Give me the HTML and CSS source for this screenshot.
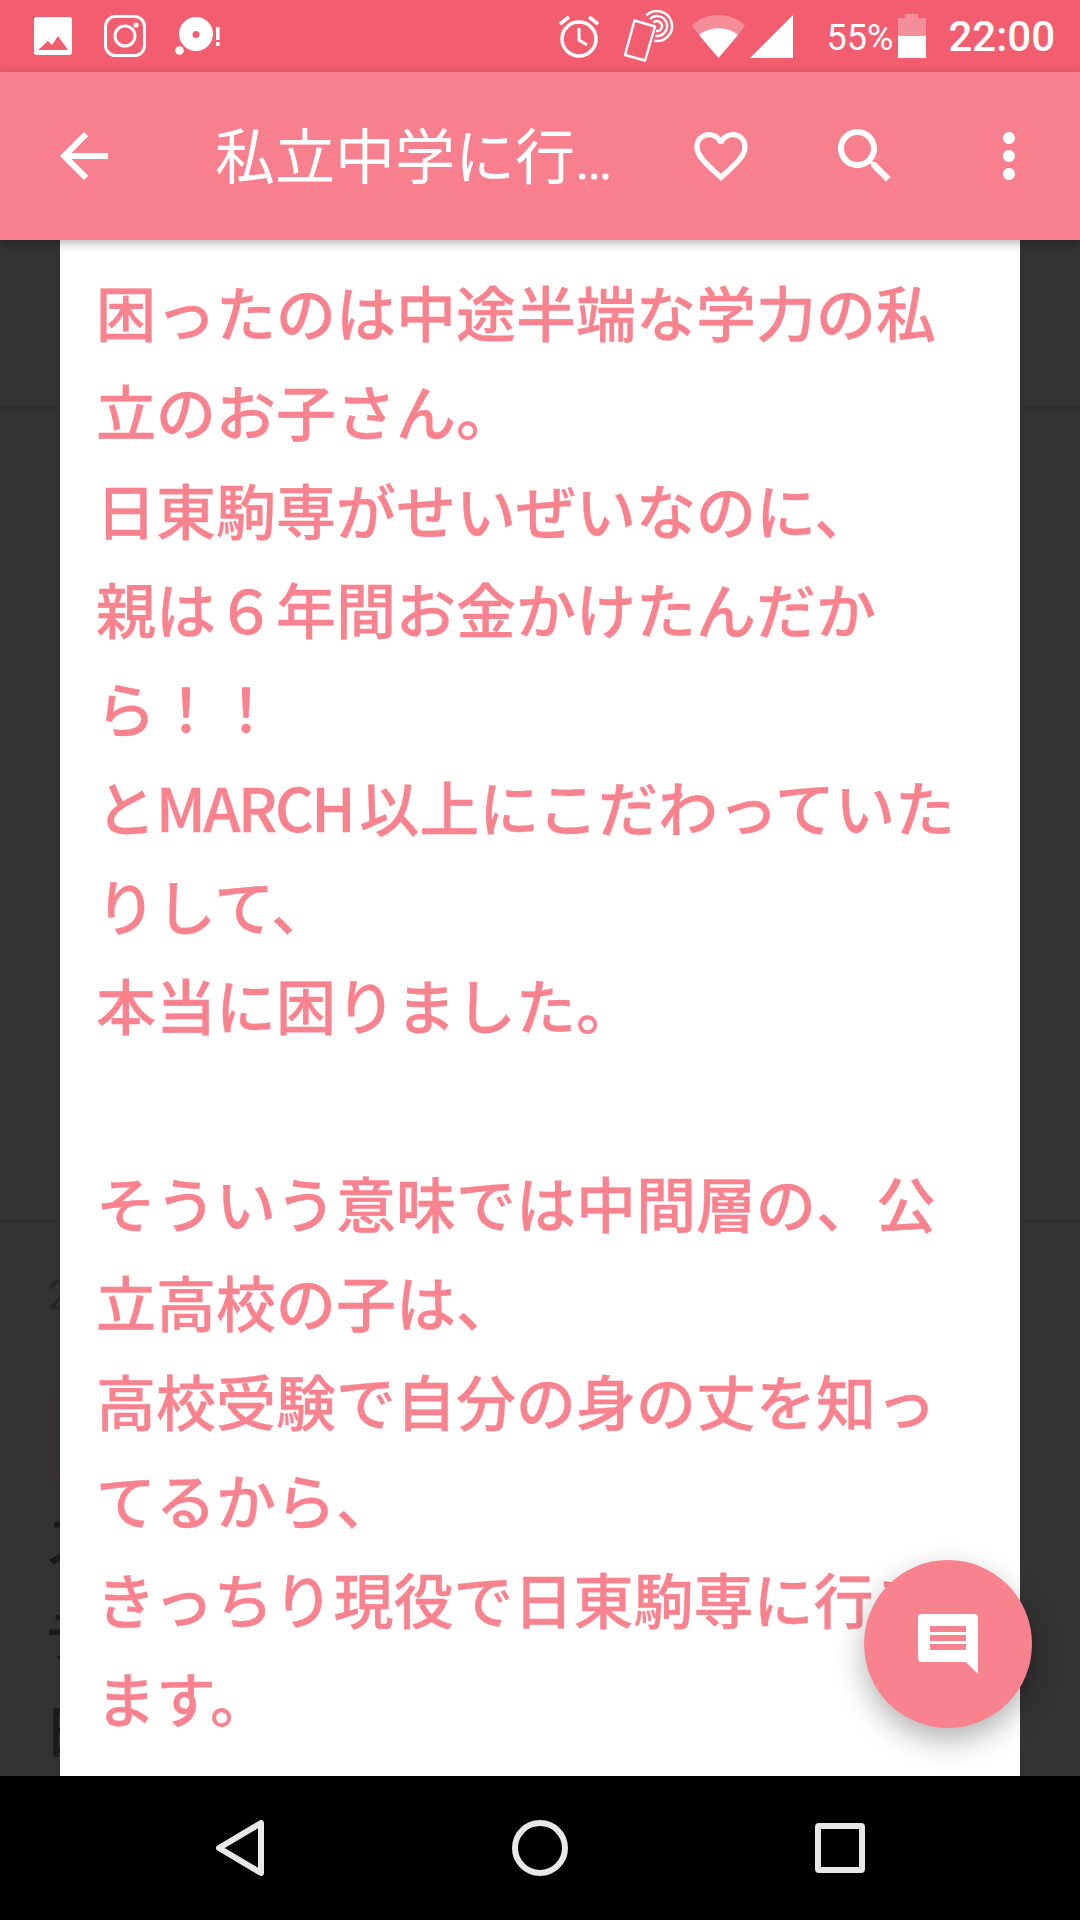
FILE: index.html
```html
<!DOCTYPE html>
<html lang="ja">
<head>
    <meta charset="UTF-8">
    <meta name="viewport" content="width=device-width, initial-scale=1.0">
    <title>私立中学に行...</title>
    <link rel="stylesheet" href="styles.css">
</head>
<body>
    <!-- Status bar -->
    <header class="status-bar">
        <div class="status-left">
            <svg class="icon-image" viewBox="0 0 38 38"><path fill="#fff" d="M3 0h32a3 3 0 0 1 3 3v32a3 3 0 0 1-3 3H3a3 3 0 0 1-3-3V3a3 3 0 0 1 3-3zM4 33h30L24 19l-6 9-4-4z" fill-rule="evenodd"/></svg>
            <svg class="icon-insta" viewBox="0 0 42 42" fill="none" stroke="#fff" stroke-width="3"><rect x="1.5" y="1.5" width="39" height="39" rx="10"/><circle cx="21" cy="21" r="10"/><circle cx="32" cy="10" r="2.6" fill="#fff" stroke="none"/></svg>
            <svg class="icon-disc" viewBox="0 0 45 38" fill="#fff"><path fill-rule="evenodd" d="M21 0a17 17 0 1 1 0 34 17 17 0 0 1 0-34zm0 14a3.4 3.4 0 1 0 0 7 3.4 3.4 0 0 0 0-7z"/><circle cx="4.500" cy="33.500" r="4.300"/><rect x="41" y="10" width="3.600" height="13"/><rect x="41" y="25" width="3.600" height="4"/></svg>
        </div>
        <div class="status-right">
            <svg class="icon-alarm" viewBox="0 0 42 44" fill="none" stroke="#fff" stroke-width="3.500"><circle cx="21" cy="25" r="17"/><path stroke-width="3" d="M21 14v12l8 5"/><path d="M2 10l9-7M40 10l-9-7"/></svg>
            <svg class="icon-nfc" viewBox="0 0 52 52" fill="none" stroke="#fff" stroke-width="2.500"><path d="M10.500 10.500l20.500 6-10 34-20-5.500z" stroke-linejoin="round"/><path d="M22.400 5.400A15 15 0 1 1 30.400 30.800M26 9A10 10 0 1 1 31.300 25.900M29.500 12.500A5 5 0 1 1 32 21"/></svg>
            <svg class="icon-wifi" viewBox="0 0 53 43"><path fill="#fff" fill-opacity=".3" d="M0 10.500C14-3.500 39-3.500 53 10.500L46 20C36 11 17 11 7 20z"/><path fill="#fff" d="M7 20C17 11 36 11 46 20L26.500 43z"/></svg>
            <svg class="icon-signal" viewBox="0 0 43 43"><path fill="#fff" d="M43 0v43H0z"/></svg>
            <span class="battery-text">55%</span>
            <svg class="icon-battery" viewBox="0 0 28 44"><path fill="#fff" fill-opacity=".3" d="M7 0h13v4h8v18H0V4h7z"/><rect y="22" width="28" height="22" fill="#fff"/></svg>
            <span class="clock">22:00</span>
        </div>
    </header>

    <!-- Toolbar -->
    <div class="toolbar">
        <svg class="tool-icon" viewBox="0 0 24 24"><path fill="#fff" d="M20 11H7.830l5.590-5.590L12 4l-8 8 8 8 1.410-1.410L7.830 13H20v-2z"/></svg>
        <div class="toolbar-title">私立中学に行<span class="dots">…</span></div>
        <div class="toolbar-actions">
            <div class="tool-slot"><svg class="heart-icon" viewBox="0 0 24 24"><path fill="#fff" d="M16.500 3c-1.740 0-3.410.81-4.500 2.090C10.910 3.810 9.240 3 7.500 3 4.420 3 2 5.420 2 8.500c0 3.780 3.400 6.860 8.550 11.540L12 21.350l1.450-1.320C18.600 15.360 22 12.280 22 8.500 22 5.420 19.580 3 16.500 3zm-4.400 15.550l-.1.100-.1-.1C7.140 14.240 4 11.390 4 8.500 4 6.500 5.500 5 7.500 5c1.540 0 3.040.99 3.570 2.360h1.870C13.460 5.990 14.960 5 16.500 5c2 0 3.500 1.500 3.500 3.500 0 2.890-3.140 5.740-7.900 10.050z"/></svg></div>
            <svg class="tool-icon" viewBox="0 0 24 24"><path fill="#fff" d="M15.500 14h-.79l-.28-.27C15.410 12.590 16 11.110 16 9.500 16 5.910 13.090 3 9.500 3S3 5.910 3 9.500 5.910 16 9.500 16c1.610 0 3.090-.59 4.230-1.570l.27.28v.79l5 4.990L20.490 19l-4.990-5zm-6 0C7.010 14 5 11.990 5 9.500S7.010 5 9.500 5 14 7.010 14 9.500 11.990 14 9.500 14z"/></svg>
            <svg class="tool-icon" viewBox="0 0 24 24"><path fill="#fff" d="M12 8c1.100 0 2-.9 2-2s-.9-2-2-2-2 .9-2 2 .9 2 2 2zm0 2c-1.100 0-2 .9-2 2s.9 2 2 2 2-.9 2-2-.9-2-2-2zm0 6c-1.100 0-2 .9-2 2s.9 2 2 2 2-.9 2-2-.9-2-2-2z"/></svg>
        </div>
    </div>

    <main class="content">
        <!-- dimmed page behind the dialog -->
        <div class="behind">
            <div class="behind-top"></div>
            <div class="behind-mid"></div>
            <div class="behind-date">2</div>
            <div class="behind-thumb"></div>
            <div class="behind-text">ス<br>テ<br>日</div>
        </div>

        <div class="card">
            <p class="card-text">困ったのは中途半端な学力の私立のお子さん。<br>日東駒専がせいぜいなのに、<br>親は６年間お金かけたんだから！！<br>と<span class="latin">MARCH</span>以上にこだわっていた<br>りして、<br>本当に困りました。<br><br>そういう意味では中間層の、公立高校の子は、<br>高校受験で自分の身の丈を知ってるから、<br>きっちり現役で日東駒専に行きます。</p>
        </div>

        <div class="fab">
            <svg class="fab-icon" viewBox="0 0 60 60"><path fill="#fff" fill-rule="evenodd" d="M4 0h52a4 4 0 0 1 4 4v56L48 48H4a4 4 0 0 1-4-4V4a4 4 0 0 1 4-4zM12 12v6h36v-6zM12 21v6h36v-6zM12 30v6h36v-6z"/></svg>
        </div>
    </main>

    <!-- Navigation bar -->
    <footer class="nav-bar">
        <div class="nav-item"><svg class="nav-back" viewBox="0 0 48 56" fill="none" stroke="#e8e8e8" stroke-width="6" stroke-linejoin="round"><path d="M45 3v50L3 28z"/></svg></div>
        <div class="nav-item"><svg class="nav-home" viewBox="0 0 56 56" fill="none" stroke="#e8e8e8" stroke-width="6"><circle cx="28" cy="28" r="25"/></svg></div>
        <div class="nav-item"><svg class="nav-recent" viewBox="0 0 50 50" fill="none" stroke="#e8e8e8" stroke-width="6" stroke-linejoin="round"><rect x="3" y="3" width="44" height="44" rx="1"/></svg></div>
    </footer>
</body>
</html>
```

FILE: styles.css
```css
/* General Styles */
body {
    margin: 0;
    width: 1080px;
    height: 1920px;
    display: flex;
    flex-direction: column;
    overflow: hidden;
    font-family: "Noto Sans CJK JP", Roboto, sans-serif;
}

svg {
    display: block;
    flex: none;
}

/* Status bar */
.status-bar {
    height: 72px;
    background-color: #f25e6f;
    color: white;
    display: flex;
    justify-content: space-between;
    align-items: center;
    padding: 0 25px 0 34px;
    font-family: Roboto, sans-serif;
}

.status-left,
.status-right {
    display: flex;
    align-items: center;
}

.icon-image { width: 38px; height: 38px; }
.icon-insta { width: 42px; height: 42px; margin-left: 32px; }
.icon-disc { width: 45px; height: 38px; margin-left: 29px; }

.icon-alarm { width: 42px; height: 44px; }
.icon-nfc { width: 52px; height: 52px; margin-left: 24px; }
.icon-wifi { width: 53px; height: 43px; margin-left: 16px; }
.icon-signal { width: 43px; height: 43px; margin-left: 5px; }
.icon-battery { width: 28px; height: 44px; margin-left: 5px; }

.battery-text {
    font-size: 36px;
    margin-left: 34px;
    padding-top: 4px;
}

.clock {
    font-size: 42px;
    font-weight: 500;
    margin-left: 22px;
}

/* Toolbar */
.toolbar {
    height: 168px;
    background-color: #f8808e;
    color: white;
    display: flex;
    align-items: center;
    padding: 0 35px 0 48px;
    position: relative;
    z-index: 2;
    box-shadow: 0 3px 10px rgba(0, 0, 0, 0.3);
}

.tool-icon {
    width: 72px;
    height: 72px;
}

.tool-slot {
    width: 72px;
    height: 72px;
    display: flex;
    align-items: center;
    justify-content: center;
}

.heart-icon {
    width: 64px;
    height: 64px;
}

.toolbar-title {
    margin-left: 95px;
    padding-bottom: 8px;
    font-size: 60px;
    white-space: nowrap;
}

.dots {
    font-family: Roboto, sans-serif;
    font-size: 56px;
}

.toolbar-actions {
    display: flex;
    gap: 72px;
    margin-left: auto;
}

/* Content */
.content {
    flex: 1;
    position: relative;
    background-color: #333;
    overflow: hidden;
}

.behind-top {
    height: 167px;
    border-bottom: 3px solid #2e2e2e;
}

.behind-mid {
    height: 810px;
    border-bottom: 3px solid #2e2e2e;
}

.behind-date {
    margin: 51px 0 0 48px;
    font-family: Roboto, sans-serif;
    font-size: 40px;
    line-height: 44px;
    color: #262626;
}

.behind-thumb {
    width: 100px;
    height: 88px;
    margin: 79px 0 0 48px;
    border-radius: 10px;
    background-color: #353130;
}

.behind-text {
    margin: 5px 0 0 44px;
    font-size: 56px;
    font-weight: 500;
    line-height: 95px;
    color: #1a1a1a;
}

.card {
    position: absolute;
    left: 60px;
    right: 60px;
    top: 0;
    bottom: 0;
    background-color: white;
    padding: 21px 36px;
}

.card-text {
    margin: 0;
    font-size: 60px;
    font-weight: 500;
    line-height: 99px;
    color: #f8838f;
    -webkit-text-stroke: 0.3px #f8838f;
}

.latin {
    letter-spacing: -2.5px;
    margin-right: 6px;
}

.fab {
    position: absolute;
    left: 864px;
    top: 1320px;
    width: 168px;
    height: 168px;
    border-radius: 50%;
    background-color: #f8838f;
    box-shadow: 0 12px 30px rgba(0, 0, 0, 0.3);
    display: flex;
    align-items: center;
    justify-content: center;
}

.fab-icon {
    width: 60px;
    height: 60px;
}

/* Navigation bar */
.nav-bar {
    height: 144px;
    background-color: black;
    display: flex;
    justify-content: center;
    align-items: center;
}

.nav-item {
    width: 300px;
    display: flex;
    justify-content: center;
}

.nav-back { width: 48px; height: 56px; }
.nav-home { width: 56px; height: 56px; }
.nav-recent { width: 50px; height: 50px; }
```
